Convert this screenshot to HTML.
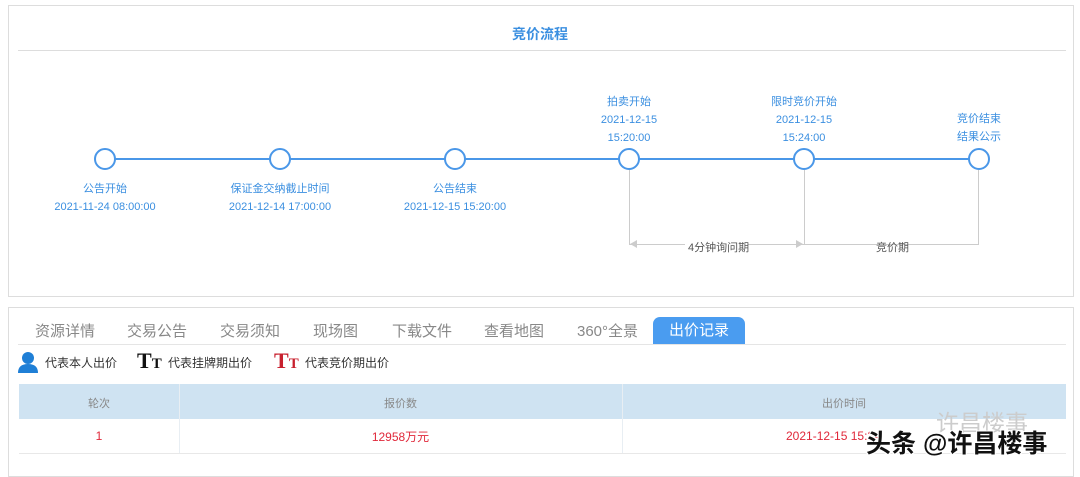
<!DOCTYPE html>
<html><head><meta charset="utf-8"><style>
*{margin:0;padding:0;box-sizing:border-box}
body{width:1080px;height:472px;background:#fff;font-family:"Liberation Sans","Noto Sans CJK SC",sans-serif;position:relative;overflow:hidden}
.a{position:absolute}
.blue{color:#3b8fe0;font-size:11px;text-align:center;white-space:nowrap}
.tab{position:absolute;top:320px;font-size:15px;color:#888}
</style></head><body>
<div class="a" style="left:8px;top:5px;width:1066px;height:292px;border:1px solid #ddd"></div>
<div class="a" style="left:0;width:1080px;top:24px;text-align:center;font-size:14px;font-weight:bold;color:#3b8fe0">竞价流程</div>
<div class="a" style="left:18px;top:50px;width:1048px;height:1px;background:#ddd"></div>
<svg class="a" style="left:0;top:0" width="1080" height="300">
<line x1="95" y1="159" x2="970" y2="159" stroke="#4a97e8" stroke-width="2"/>
<g fill="#fff" stroke="#4a97e8" stroke-width="2">
<circle cx="105" cy="159" r="10"/><circle cx="280" cy="159" r="10"/><circle cx="455" cy="159" r="10"/><circle cx="629" cy="159" r="10"/><circle cx="804" cy="159" r="10"/><circle cx="979" cy="159" r="10"/></g>
<g stroke="#ccc" stroke-width="1"><line x1="629.5" y1="170" x2="629.5" y2="245"/><line x1="804.5" y1="170" x2="804.5" y2="245"/><line x1="978.5" y1="170" x2="978.5" y2="245"/>
<line x1="630" y1="244.5" x2="685" y2="244.5"/><line x1="748" y1="244.5" x2="978" y2="244.5"/></g>
<polygon points="630,244 637,240 637,248" fill="#ccc"/><polygon points="803,244 796,240 796,248" fill="#ccc"/>
</svg>
<div class="a" style="left:688px;top:239px;font-size:11px;color:#555">4分钟询问期</div>
<div class="a" style="left:876px;top:239px;font-size:11px;color:#555">竞价期</div>
<div class="a blue" style="left:55px;width:100px;top:180px">公告开始</div>
<div class="a blue" style="left:205px;width:150px;top:201px">2021-12-14 17:00:00</div>
<div class="a blue" style="left:30px;width:150px;top:201px">2021-11-24 08:00:00</div>
<div class="a blue" style="left:205px;width:150px;top:180px">保证金交纳截止时间</div>
<div class="a blue" style="left:380px;width:150px;top:180px">公告结束</div>
<div class="a blue" style="left:380px;width:150px;top:201px">2021-12-15 15:20:00</div>
<div class="a blue" style="left:569px;width:120px;top:93px;line-height:18px">拍卖开始<br>2021-12-15<br>15:20:00</div>
<div class="a blue" style="left:734px;width:140px;top:93px;line-height:18px">限时竞价开始<br>2021-12-15<br>15:24:00</div>
<div class="a blue" style="left:919px;width:120px;top:110px;line-height:18px">竞价结束<br>结果公示</div>

<div class="a" style="left:8px;top:307px;width:1066px;height:170px;border:1px solid #ddd"></div>
<div class="a" style="left:18px;top:344px;width:1048px;height:1px;background:#e5e5e5"></div>
<div class="tab" style="left:35px">资源详情</div>
<div class="tab" style="left:127px">交易公告</div>
<div class="tab" style="left:220px">交易须知</div>
<div class="tab" style="left:313px">现场图</div>
<div class="tab" style="left:392px">下载文件</div>
<div class="tab" style="left:484px">查看地图</div>
<div class="tab" style="left:577px">360°全景</div>
<div class="a" style="left:653px;top:317px;width:92px;height:27px;background:#4a9cf0;border-radius:7px 7px 0 0;color:#fff;font-size:15px;text-align:center;line-height:27px">出价记录</div>
<svg class="a" style="left:17px;top:351px" width="22" height="22"><circle cx="11" cy="7" r="6" fill="#1f7fd6"/><path d="M1 22 Q1 13 11 13 Q21 13 21 22Z" fill="#1f7fd6"/></svg>
<div class="a" style="left:45px;top:354px;font-size:12px;color:#333">代表本人出价</div>
<div class="a" style="left:137px;top:348px;font-family:'Liberation Serif',serif;font-weight:bold;font-size:22px;color:#111">T<span style="font-size:15px">T</span></div>
<div class="a" style="left:168px;top:354px;font-size:12px;color:#333">代表挂牌期出价</div>
<div class="a" style="left:274px;top:348px;font-family:'Liberation Serif',serif;font-weight:bold;font-size:22px;color:#c8202e">T<span style="font-size:15px">T</span></div>
<div class="a" style="left:305px;top:354px;font-size:12px;color:#333">代表竞价期出价</div>
<div class="a" style="left:19px;top:384px;width:1047px;height:35px;background:#cfe3f2"></div>
<div class="a" style="left:179px;top:384px;width:1px;height:70px;background:#e8eef3"></div>
<div class="a" style="left:622px;top:384px;width:1px;height:70px;background:#e8eef3"></div>
<div class="a" style="left:19px;top:453px;width:1047px;height:1px;background:#e8e8e8"></div>
<div class="a" style="left:19px;top:395px;width:160px;text-align:center;font-size:11px;color:#888">轮次</div>
<div class="a" style="left:179px;top:395px;width:443px;text-align:center;font-size:11px;color:#888">报价数</div>
<div class="a" style="left:622px;top:395px;width:444px;text-align:center;font-size:11px;color:#888">出价时间</div>
<div class="a" style="left:19px;top:429px;width:160px;text-align:center;font-size:12px;color:#e0283a">1</div>
<div class="a" style="left:179px;top:428px;width:443px;text-align:center;font-size:12px;color:#e0283a">12958万元</div>
<div class="a" style="left:786px;top:429px;font-size:12px;color:#e0283a">2021-12-15 15:24</div>
<div class="a" style="left:936px;top:404px;font-size:23px;color:#ccc">许昌楼事</div>
<div class="a" style="left:866px;top:424px;font-size:25px;font-weight:bold;color:#111;text-shadow:1px 1px 0 #fff,-1px -1px 0 #fff,1px -1px 0 #fff,-1px 1px 0 #fff">头条 @许昌楼事</div>
</body></html>
